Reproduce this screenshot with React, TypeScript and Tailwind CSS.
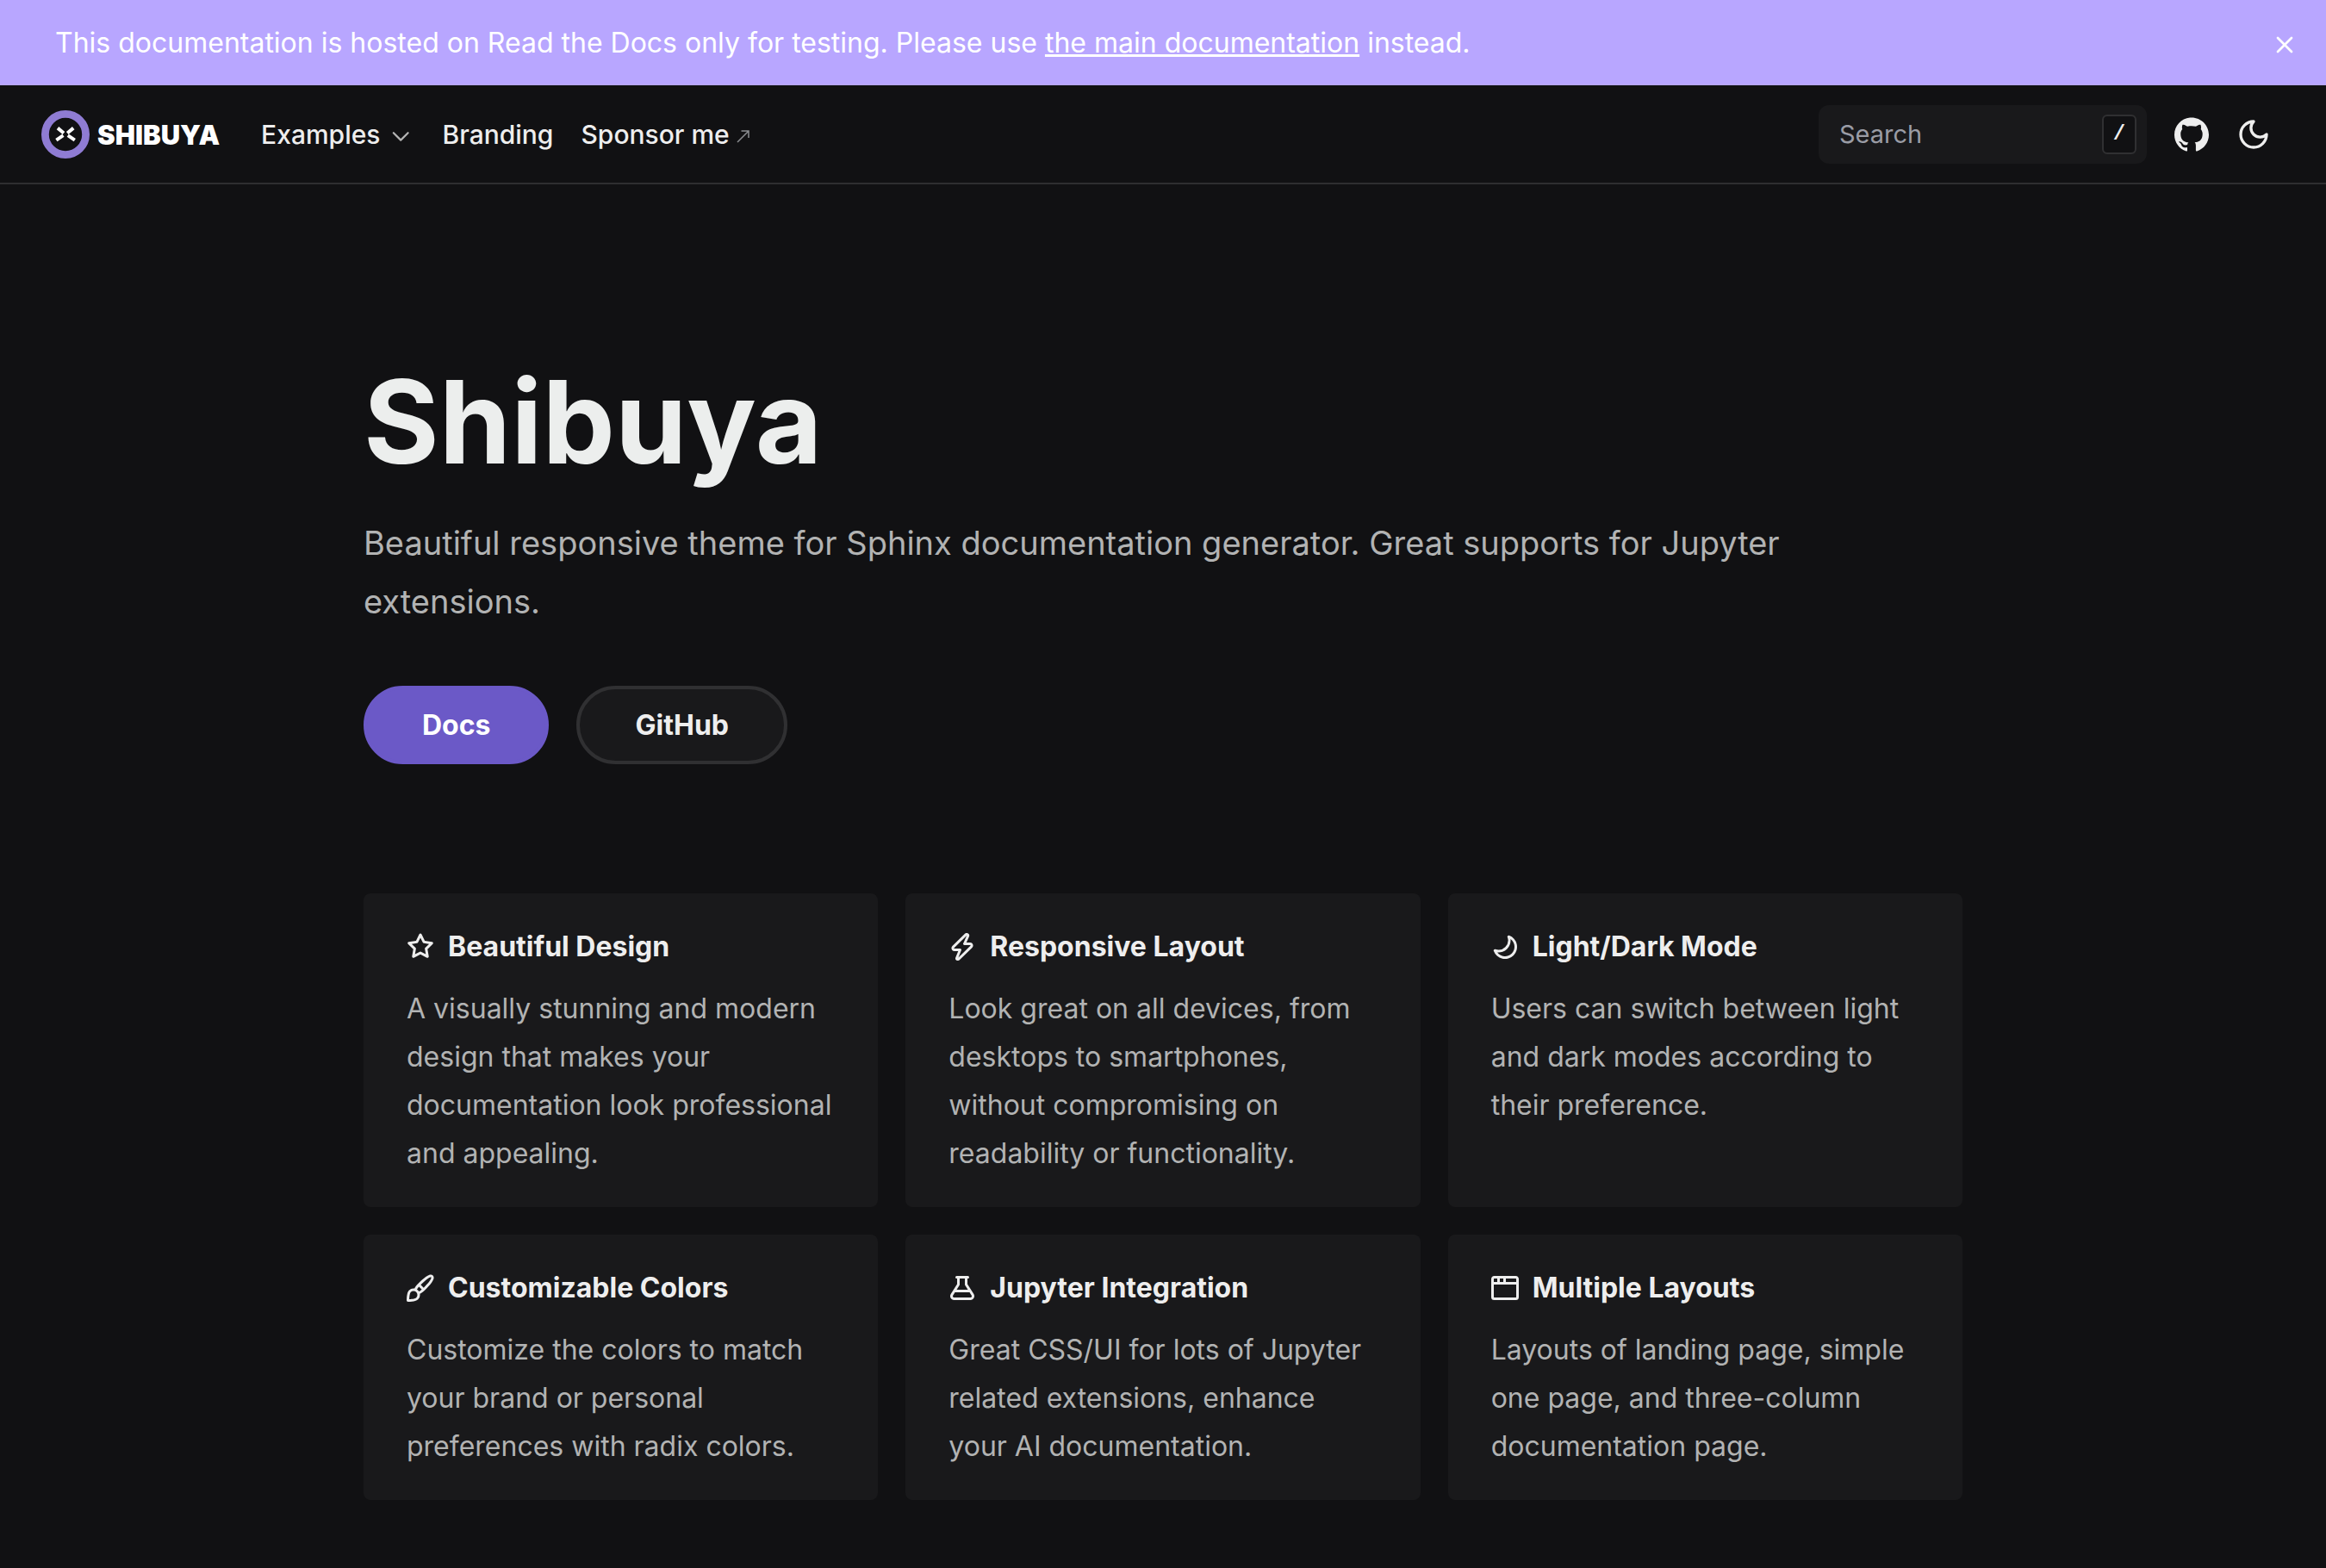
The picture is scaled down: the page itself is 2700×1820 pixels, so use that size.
import React from "react";
import { X } from "lucide-react";
import { SiGithub } from "react-icons/si";

const icons = {
  star: "M8 .25a.75.75 0 0 1 .673.418l1.882 3.815 4.21.612a.75.75 0 0 1 .416 1.279l-3.046 2.97.719 4.192a.751.751 0 0 1-1.088.791L8 12.347l-3.766 1.98a.75.75 0 0 1-1.088-.79l.72-4.194L.818 6.374a.75.75 0 0 1 .416-1.28l4.21-.611L7.327.668A.75.75 0 0 1 8 .25Zm0 2.445L6.615 5.5a.75.75 0 0 1-.564.41l-3.097.45 2.24 2.184a.75.75 0 0 1 .216.664l-.528 3.084 2.769-1.456a.75.75 0 0 1 .698 0l2.77 1.456-.53-3.084a.75.75 0 0 1 .216-.664l2.24-2.183-3.096-.45a.75.75 0 0 1-.564-.41L8 2.694Z",
  zap: "M9.504.43a1.516 1.516 0 0 1 2.437 1.713L10.415 5.5h2.123c1.57 0 2.346 1.909 1.22 3.004l-7.34 7.142a1.249 1.249 0 0 1-.871.354h-.302a1.25 1.25 0 0 1-1.157-1.723L5.633 10.5H3.462c-1.57 0-2.346-1.909-1.22-3.004L9.503.429Zm1.047 1.074L3.286 8.571A.25.25 0 0 0 3.462 9H6.75a.75.75 0 0 1 .694 1.034l-1.713 4.188 6.982-6.793A.25.25 0 0 0 12.538 7H9.25a.75.75 0 0 1-.683-1.06l2.008-4.418.003-.006a.036.036 0 0 0-.004-.009l-.006-.006-.008-.001c-.003 0-.006.002-.009.004Z",
  moon: "M9.598 1.591a.749.749 0 0 1 .785-.175 7.001 7.001 0 1 1-8.967 8.967.75.75 0 0 1 .961-.96 5.5 5.5 0 0 0 7.046-7.046.75.75 0 0 1 .175-.786Zm1.616 1.945a7 7 0 0 1-7.678 7.678 5.499 5.499 0 1 0 7.678-7.678Z",
  brush: "M11.134 1.535c.7-.509 1.416-.942 2.076-1.155.649-.21 1.463-.267 2.069.34.603.601.568 1.411.368 2.07-.202.668-.624 1.39-1.125 2.096-1.011 1.424-2.496 2.987-3.775 4.249-1.098 1.084-2.132 1.839-3.04 2.3a3.744 3.744 0 0 1-1.055 3.217c-.431.431-1.065.691-1.657.861-.614.177-1.294.287-1.914.357A21.151 21.151 0 0 1 .797 16H.743l.007-.75H.749L.742 16a.75.75 0 0 1-.743-.742l.743-.008-.742.007v-.054a21.25 21.25 0 0 1 .13-2.284c.067-.647.187-1.287.358-1.914.17-.591.43-1.226.86-1.657a3.746 3.746 0 0 1 3.227-1.054c.466-.893 1.225-1.907 2.314-2.982 1.271-1.255 2.833-2.75 4.245-3.777ZM1.62 13.089c-.051.464-.086.929-.104 1.395.466-.018.932-.053 1.396-.104a10.511 10.511 0 0 0 1.668-.309c.526-.151.856-.325 1.011-.48a2.25 2.25 0 1 0-3.182-3.182c-.155.155-.329.485-.48 1.01a10.515 10.515 0 0 0-.309 1.67Zm10.396-10.34c-1.224.89-2.605 2.189-3.822 3.384l1.718 1.718c1.21-1.205 2.51-2.597 3.387-3.833.47-.662.78-1.227.912-1.662.134-.444.032-.551.009-.575h-.001V1.78c-.014-.014-.113-.113-.548.027-.432.14-.995.462-1.655.942Zm-4.832 7.266-.001.001a9.859 9.859 0 0 0 1.63-1.142L7.155 7.216a9.7 9.7 0 0 0-1.161 1.607c.482.302.889.71 1.19 1.192Z",
  beaker: "M5 5.782V2.5h-.25a.75.75 0 0 1 0-1.5h6.5a.75.75 0 0 1 0 1.5H11v3.282l3.666 5.76C15.619 13.04 14.543 15 12.767 15H3.233c-1.776 0-2.852-1.96-1.899-3.458Zm-2.4 6.565a.75.75 0 0 0 .633 1.153h9.534a.75.75 0 0 0 .633-1.153L12.225 10.5h-8.45ZM9.5 2.5h-3V6c0 .143-.04.283-.117.403L4.73 9h6.54L9.617 6.403A.746.746 0 0 1 9.5 6Z",
  browser: "M0 2.75C0 1.784.784 1 1.75 1h12.5c.966 0 1.75.784 1.75 1.75v10.5A1.75 1.75 0 0 1 14.25 15H1.75A1.75 1.75 0 0 1 0 13.25ZM14.5 6h-13v7.25c0 .138.112.25.25.25h12.5a.25.25 0 0 0 .25-.25Zm-6-3.5v2h6V2.75a.25.25 0 0 0-.25-.25ZM5 2.5v2h2v-2Zm-3.25 0a.25.25 0 0 0-.25.25V4.5h2v-2Z",
};

type Feature = { icon: keyof typeof icons; title: string; text: string };

const features: Feature[] = [
  { icon: "star", title: "Beautiful Design", text: "A visually stunning and modern design that makes your documentation look professional and appealing." },
  { icon: "zap", title: "Responsive Layout", text: "Look great on all devices, from desktops to smartphones, without compromising on readability or functionality." },
  { icon: "moon", title: "Light/Dark Mode", text: "Users can switch between light and dark modes according to their preference." },
  { icon: "brush", title: "Customizable Colors", text: "Customize the colors to match your brand or personal preferences with radix colors." },
  { icon: "beaker", title: "Jupyter Integration", text: "Great CSS/UI for lots of Jupyter related extensions, enhance your AI documentation." },
  { icon: "browser", title: "Multiple Layouts", text: "Layouts of landing page, simple one page, and three-column documentation page." },
];

function Announcement() {
  return (
    <div className="flex items-center bg-[#b8a6ff] py-[25px] pr-8 pl-16 text-[32px] leading-[49px] text-white">
      <p className="flex-1">
        This documentation is hosted on Read the Docs only for testing. Please use{" "}
        <a className="underline" href="#docs">the main documentation</a> instead.
      </p>
      <button type="button" aria-label="Close" className="pt-1">
        <X className="size-8" />
      </button>
    </div>
  );
}

function Logo() {
  return (
    <a href="#home" className="flex items-center gap-[9px] text-white">
      <svg viewBox="0 0 56 56" className="size-14" fill="none" aria-hidden="true">
        <circle cx="28" cy="28" r="23.6" stroke="#8f7cd3" strokeWidth="8.8" />
        <path d="M19 20.6l7 5.9M37.2 20.6l-7 5.9M17.4 34.6l8-5.4M38.8 34.6l-8-5.4" stroke="#fff" strokeWidth="4" />
      </svg>
      <span className="text-[31px] leading-none font-black">SHIBUYA</span>
    </a>
  );
}

function Header() {
  return (
    <header className="flex items-center border-b-2 border-[#2e2e30] pt-[23px] pr-16 pb-[22px] pl-12">
      <Logo />
      <nav className="ml-12 flex items-center gap-8 text-[30px] font-medium">
        <button type="button" className="flex items-center gap-2">
          Examples
          <svg viewBox="0 0 32 32" className="size-8" fill="none" stroke="#b4b4b4" strokeWidth="2.2" strokeLinecap="round" strokeLinejoin="round" aria-hidden="true">
            <path d="M7.8 14.2l8.4 8.4 8.4-8.4" />
          </svg>
        </button>
        <a href="#branding">Branding</a>
        <a href="#sponsor" className="flex items-center gap-2">
          Sponsor me
          <svg viewBox="0 0 16 20" className="h-5 w-4" fill="none" stroke="#8b8d91" strokeWidth="1.5" aria-hidden="true">
            <path d="M1 19L14 6M5.5 6H14V14" />
          </svg>
        </a>
      </nav>
      <div className="ml-auto flex items-center gap-8">
        <div className="flex w-[381px] items-center rounded-xl bg-[#19191b] py-[11px] pr-3 pl-6">
          <input
            type="search"
            aria-label="Search"
            placeholder="Search"
            className="min-w-0 flex-1 bg-transparent text-[29px] leading-[44px] outline-none placeholder:text-[#9a9ca5]"
          />
          <kbd className="flex h-[46px] w-10 items-center justify-center rounded-md border-2 border-[#303032] bg-[#111113] font-['Liberation_Mono',monospace] text-2xl font-bold">/</kbd>
        </div>
        <a href="#github" aria-label="GitHub"><SiGithub className="size-10" /></a>
        <button type="button" aria-label="Toggle color mode">
          <svg viewBox="0 0 24 24" className="size-10" fill="none" stroke="currentColor" strokeWidth="2" strokeLinecap="round" strokeLinejoin="round" aria-hidden="true">
            <path d="M12 3a6 6 0 0 0 9 9 9 9 0 1 1-9-9Z" />
          </svg>
        </button>
      </div>
    </header>
  );
}

function FeatureCard({ icon, title, text }: Feature) {
  return (
    <section className="rounded-lg bg-[#19191b] px-[50px] py-[34px] text-[32px] leading-[56px]">
      <h2 className="flex items-center gap-4 font-bold">
        <svg viewBox="0 0 16 16" className="size-8 shrink-0" fill="currentColor" aria-hidden="true">
          <path d={icons[icon]} />
        </svg>
        {title}
      </h2>
      <p className="mt-4 text-[#b2b3b3]">{text}</p>
    </section>
  );
}

export default function App() {
  return (
    <div className="min-h-screen bg-[#111113] font-['Inter',sans-serif] text-[#eeeeee]">
      <Announcement />
      <Header />
      <main className="mx-auto max-w-[1856px] pt-[200px] pb-16">
        <h1 className="text-[134px] leading-[150px] font-bold text-[#eceeed]">Shibuya</h1>
        <p className="mt-8 text-[38px] leading-[68px] text-[#b2b3b3]">
          Beautiful responsive theme for Sphinx documentation generator. Great supports for Jupyter extensions.
        </p>
        <div className="mt-16 flex gap-8 text-[32px] leading-[35px] font-bold">
          <a href="#docs" className="rounded-full border-4 border-[#6b59c7] bg-[#6b59c7] px-16 py-6 text-white">Docs</a>
          <a href="#github" className="rounded-full border-4 border-[#303032] bg-[#19191b] px-16 py-6">GitHub</a>
        </div>
        <div className="mt-[150px] grid grid-cols-3 gap-8">
          {features.map((f) => (
            <FeatureCard key={f.title} {...f} />
          ))}
        </div>
      </main>
    </div>
  );
}
